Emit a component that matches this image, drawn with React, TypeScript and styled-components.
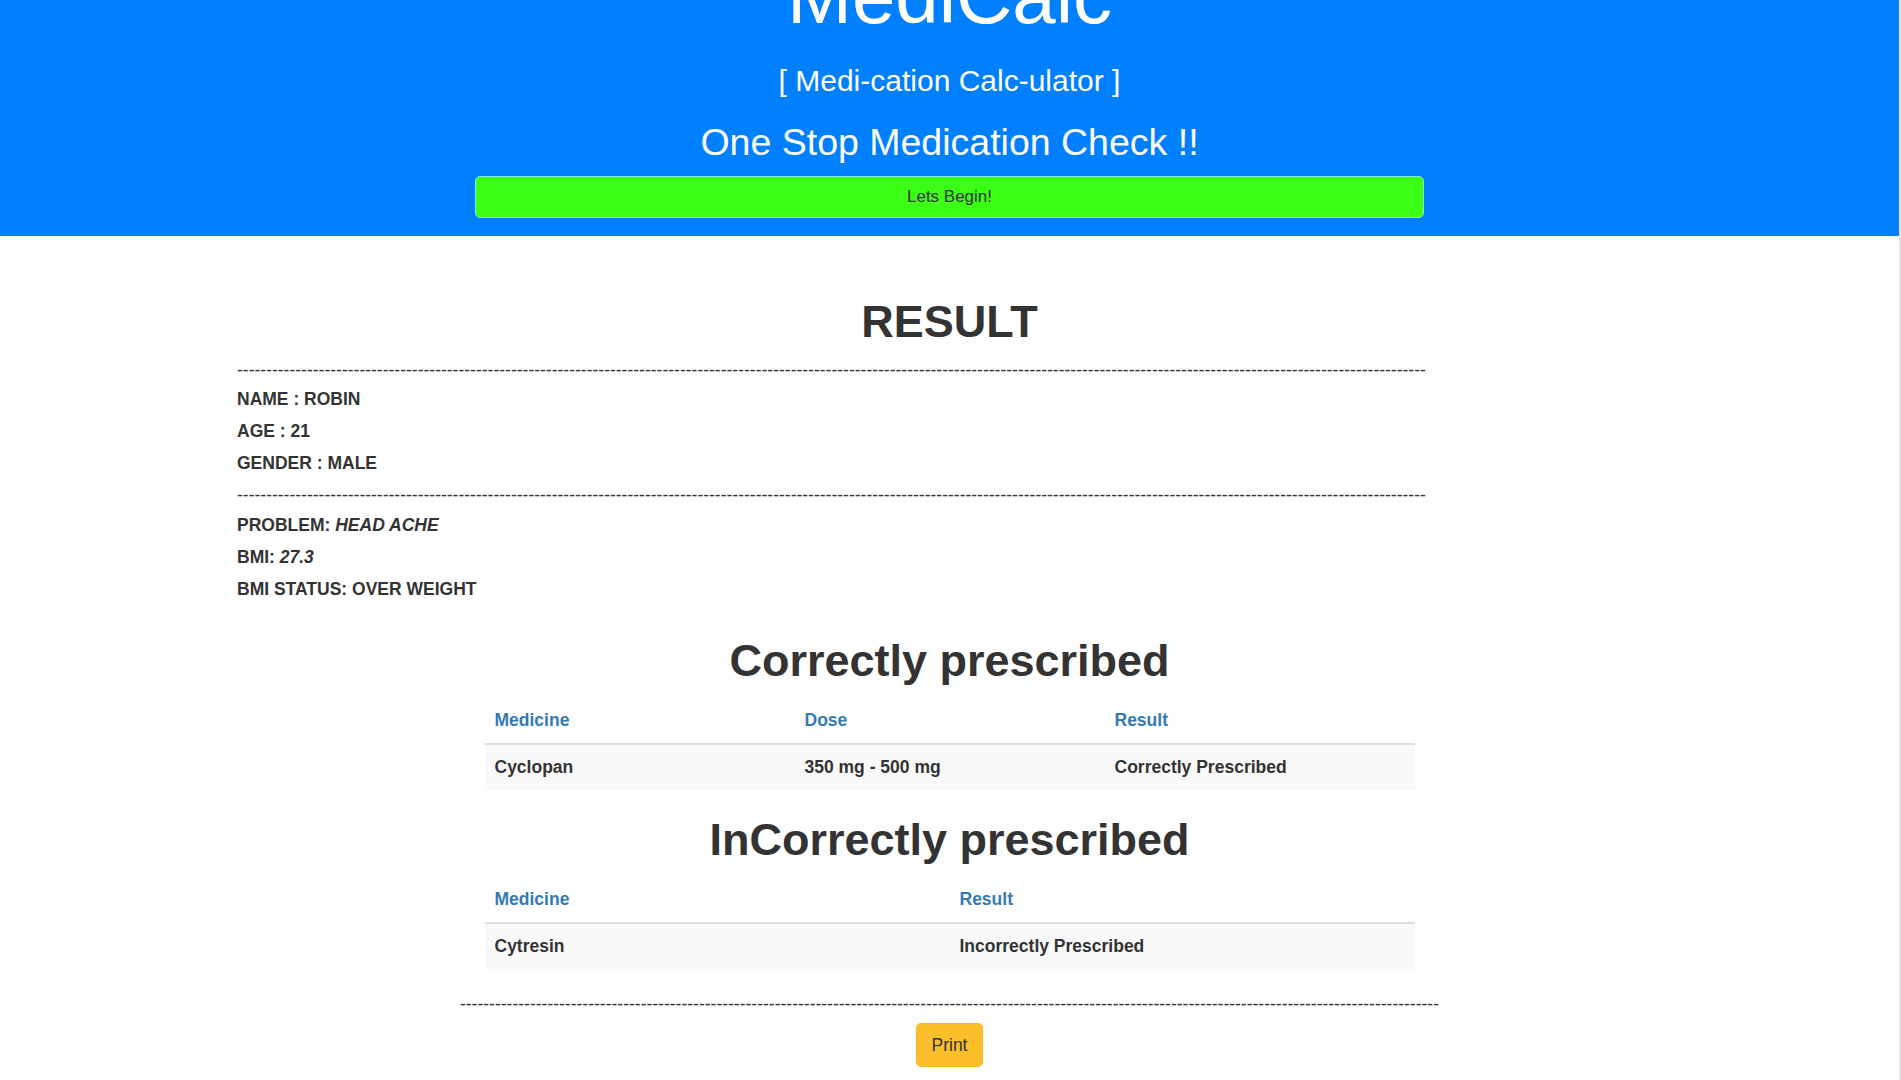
import React from "react";
import styled, { createGlobalStyle } from "styled-components";

const GlobalStyle = createGlobalStyle`
  html, body {
    margin: 0;
    padding: 0;
    background: #ffffff;
  }
  body {
    font-family: "Liberation Sans", Arial, sans-serif;
    font-size: 17.5px;
    line-height: 25px;
    color: #333333;
    overflow-x: hidden;
  }
  * { box-sizing: border-box; }
`;

const Page = styled.div`
  margin-right: 2px;
  min-height: 100vh;
`;

const ScrollTrack = styled.div`
  position: fixed;
  top: 0;
  right: 0;
  bottom: 0;
  width: 2px;
  background: #e2e2e2;
`;

const Hero = styled.header`
  display: flex;
  flex-direction: column;
  align-items: center;
  background: #007fff;
  padding-bottom: 18px;
  color: #ffffff;
`;

const Brand = styled.h1`
  margin: -43px 0 0;
  font-size: 78px;
  line-height: 1;
  font-weight: 400;
`;

const Tagline = styled.h3`
  margin: 29px 0 0;
  font-size: 30px;
  line-height: 1.1;
  font-weight: 400;
`;

const Slogan = styled.h2`
  margin: 24.5px 0 0;
  font-size: 37.5px;
  line-height: 1.1;
  font-weight: 400;
`;

const BeginButton = styled.button`
  margin-top: 13px;
  width: 50%;
  height: 42px;
  background: #3bff14;
  border: 1px solid #8fe6d8;
  border-radius: 5px;
  font-family: "Liberation Sans", Arial, sans-serif;
  font-size: 17px;
  color: #333333;
  cursor: pointer;
`;

const Container = styled.main`
  width: 1425px;
  margin: 0 auto;
`;

const ResultTitle = styled.h1`
  margin: 61.7px 0 0;
  text-align: center;
  font-size: 45px;
  line-height: 1.1;
  font-weight: 700;
  color: #333333;
`;

const DashLine = styled.div<{ $gap?: number }>`
  margin-top: ${(p) => p.$gap ?? 0}px;
  height: 25px;
  padding-top: 2px;
  line-height: 25px;
  font-size: 17.5px;
  white-space: nowrap;
  overflow: hidden;
  color: #333333;
`;

const InfoBlock = styled.div<{ $top: number; $bottom: number }>`
  display: flex;
  flex-direction: column;
  gap: 12.5px;
  padding: ${(p) => p.$top}px 0 ${(p) => p.$bottom}px;
`;

const InfoLine = styled.h5`
  margin: 0;
  font-size: 17.5px;
  line-height: 1.1;
  font-weight: 700;
  color: #333333;

  em {
    font-style: italic;
  }
`;

const Results = styled.section`
  padding-top: 29px;
`;

const SectionTitle = styled.h1`
  margin: 0 0 12.5px;
  text-align: center;
  font-size: 45px;
  line-height: 1.1;
  font-weight: 700;
  color: #333333;
`;

const Table = styled.table`
  width: 930px;
  margin: 0 auto 25px;
  border-collapse: collapse;
  table-layout: fixed;
`;

const HeadCell = styled.th`
  padding: 10px;
  text-align: left;
  font-size: 17.5px;
  line-height: 25px;
  font-weight: 700;
  color: #337ab7;
  border-bottom: 2px solid #dddddd;
`;

const BodyRow = styled.tr`
  background: #f9f9f9;
`;

const BodyCell = styled.td`
  padding: 10px;
  font-size: 17.5px;
  line-height: 25px;
  font-weight: 700;
  color: #333333;
`;

const Footer = styled.footer`
  width: 980px;
  margin: -3.5px auto 0;
  display: flex;
  flex-direction: column;
  align-items: center;
  padding-bottom: 20px;
`;

const PrintButton = styled.button`
  margin-top: 8px;
  padding: 8.5px 15px;
  background: #fbbf2b;
  border: 1px solid #f6b81f;
  border-radius: 5px;
  font-family: "Liberation Sans", Arial, sans-serif;
  font-size: 17.5px;
  line-height: 25px;
  color: #333333;
  cursor: pointer;
`;

const dashes = (n: number) => "-".repeat(n);

const correct = [
  { medicine: "Cyclopan", dose: "350 mg - 500 mg", result: "Correctly Prescribed" },
];

const incorrect = [{ medicine: "Cytresin", result: "Incorrectly Prescribed" }];

export default function App() {
  return (
    <>
      <GlobalStyle />
      <ScrollTrack />
      <Page>
        <Hero>
          <Brand>MediCalc</Brand>
          <Tagline>[ Medi-cation Calc-ulator ]</Tagline>
          <Slogan>One Stop Medication Check !!</Slogan>
          <BeginButton type="button">Lets Begin!</BeginButton>
        </Hero>

        <Container>
          <ResultTitle>RESULT</ResultTitle>
          <DashLine $gap={9}>{dashes(204)}</DashLine>
          <InfoBlock $top={9.5} $bottom={8}>
            <InfoLine>NAME : ROBIN</InfoLine>
            <InfoLine>AGE : 21</InfoLine>
            <InfoLine>GENDER : MALE</InfoLine>
          </InfoBlock>
          <DashLine>{dashes(204)}</DashLine>
          <InfoBlock $top={10} $bottom={8}>
            <InfoLine>
              PROBLEM: <em>HEAD ACHE</em>
            </InfoLine>
            <InfoLine>
              BMI: <em>27.3</em>
            </InfoLine>
            <InfoLine>BMI STATUS: OVER WEIGHT</InfoLine>
          </InfoBlock>

          <Results>
            <SectionTitle>Correctly prescribed</SectionTitle>
            <Table>
              <thead>
                <tr>
                  <HeadCell>Medicine</HeadCell>
                  <HeadCell>Dose</HeadCell>
                  <HeadCell>Result</HeadCell>
                </tr>
              </thead>
              <tbody>
                {correct.map((r) => (
                  <BodyRow key={r.medicine}>
                    <BodyCell>{r.medicine}</BodyCell>
                    <BodyCell>{r.dose}</BodyCell>
                    <BodyCell>{r.result}</BodyCell>
                  </BodyRow>
                ))}
              </tbody>
            </Table>

            <SectionTitle>InCorrectly prescribed</SectionTitle>
            <Table>
              <thead>
                <tr>
                  <HeadCell>Medicine</HeadCell>
                  <HeadCell>Result</HeadCell>
                </tr>
              </thead>
              <tbody>
                {incorrect.map((r) => (
                  <BodyRow key={r.medicine}>
                    <BodyCell>{r.medicine}</BodyCell>
                    <BodyCell>{r.result}</BodyCell>
                  </BodyRow>
                ))}
              </tbody>
            </Table>
          </Results>

          <Footer>
            <DashLine>{dashes(168)}</DashLine>
            <PrintButton type="button">Print</PrintButton>
          </Footer>
        </Container>
      </Page>
    </>
  );
}
